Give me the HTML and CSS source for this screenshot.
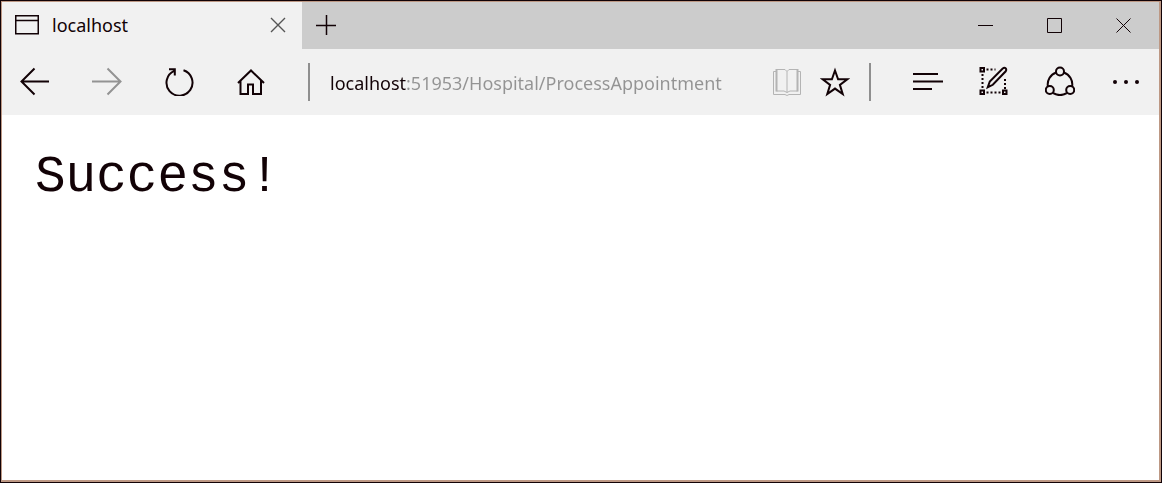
FILE: index.html
```html
<!DOCTYPE html>
<html lang="en">
<head>
<meta charset="utf-8">
<title>localhost</title>
<link rel="stylesheet" href="styles.css">
</head>
<body>
<div class="window">
  <header class="titlebar">
    <div class="tab">
      <svg class="tab-icon" width="24" height="20" viewBox="0 0 24 20"><path d="M.75.75h22.500v18H.75zM.75 5.500h22.500"/></svg>
      <span class="tab-title">localhost</span>
      <button class="tab-close" type="button" aria-label="Close tab"><svg width="16" height="16" viewBox="0 0 16 16"><path d="M1 1l14 14M15 1L1 15"/></svg></button>
    </div>
    <button class="new-tab" type="button" aria-label="New tab"><svg width="20" height="20" viewBox="0 0 20 20"><path d="M10.500 0v20M0 10.500h20"/></svg></button>
    <div class="window-controls">
      <button type="button" aria-label="Minimize"><svg width="15" height="15" viewBox="0 0 15 15"><path d="M0 7.500h15"/></svg></button>
      <button type="button" aria-label="Maximize"><svg width="15" height="15" viewBox="0 0 15 15"><path d="M.5.5h14v14H.5z"/></svg></button>
      <button type="button" aria-label="Close"><svg width="15" height="15" viewBox="0 0 15 15"><path d="M.5.5l14 14M14.500.5l-14 14"/></svg></button>
    </div>
  </header>
  <nav class="toolbar">
    <div class="group">
      <button type="button" aria-label="Back"><svg width="30" height="30" viewBox="0 0 30 30"><path d="M14.500 2.500L1.500 15.500l13 13M1.500 15.500H29"/></svg></button>
      <button type="button" aria-label="Forward" disabled><svg width="30" height="30" viewBox="0 0 30 30"><path d="M15.500 2.500l13 13-13 13M28.500 15.500H0"/></svg></button>
      <button type="button" aria-label="Refresh"><svg width="30" height="30" viewBox="0 0 30 30"><path d="M10.200 4.800A13 13 0 1 0 19.500 4.300M5 3.200h5.800v6.300"/></svg></button>
      <button type="button" aria-label="Home"><svg width="30" height="30" viewBox="0 0 30 30"><path d="M2 17L15 4.500l13 12.500M4.500 14.500V28H12V18.500h5V28h8V14.500"/></svg></button>
    </div>
    <div class="address">
      <input class="url" type="text" aria-label="Address" spellcheck="false" value="localhost:51953/Hospital/ProcessAppointment">
      <button class="reading" type="button" aria-label="Reading view" disabled><svg width="30" height="30" viewBox="0 0 30 30"><path d="M4.500 2.500h8.500l2 2 2-2h8.500v21.500H18l-3 1.500-3-1.500H4.500zM15 4.500v21"/><path class="outline" d="M4.500 2v22.500M25.500 2v22.500"/><path d="M4.500 4.500H1.500v23h11.500l2 1 2-1h11.500v-23h-3"/></svg></button>
      <button type="button" aria-label="Favorites"><svg width="30" height="30" viewBox="0 0 30 30"><path d="M15 3.500l3.100 8.800h9.200l-7.400 5.600 2.800 9.200L15 21.600l-7.700 5.500 2.800-9.200-7.400-5.600h9.200z"/></svg></button>
    </div>
    <div class="group actions">
      <button type="button" aria-label="Hub"><svg width="30" height="30" viewBox="0 0 30 30"><path d="M0 8h25M0 15.500h30M0 23h19"/></svg></button>
      <button type="button" aria-label="Make a web note"><svg width="30" height="30" viewBox="0 0 30 30"><path d="M1.500 2h3.500v3.500H1.500zM1.500 24.500h3.500V28H1.500zM24 24.500h3.500V28H24z"/><path class="dots" d="M7.500 3.500h9M3.500 8v15M7.500 26.500h15M26 13v10"/><path d="M8.800 21.200l2-5.700L23.700 2.500q1.700-1.300 2.900-.2t.1 3L13.800 18.800z"/></svg></button>
      <button type="button" aria-label="Share"><svg width="30" height="30" viewBox="0 0 30 30"><circle cx="15" cy="5.500" r="4"/><circle cx="4.800" cy="24" r="4"/><circle cx="25.200" cy="24" r="4"/><path d="M11.200 6.500A12.500 12.500 0 0 0 2.900 20.500M18.800 6.500A12.500 12.500 0 0 1 27.100 20.500M8.200 27.200Q15 31 21.800 27.200"/></svg></button>
      <button type="button" aria-label="More"><svg width="30" height="30" viewBox="0 0 30 30"><g class="solid"><circle cx="4" cy="16" r="2"/><circle cx="15" cy="16" r="2"/><circle cx="26" cy="16" r="2"/></g></svg></button>
    </div>
  </nav>
  <main class="page">Success!</main>
</div>
</body>
</html>
```
FILE: styles.css
```css
* { box-sizing: border-box; }
body {
  margin: 0;
  border: 1px solid #120206;
  font: 18px/24px "Noto Sans", "Open Sans", sans-serif;
  color: #120206;
}
.window {
  display: flex;
  flex-direction: column;
  min-height: calc(100vh - 2px);
  border: solid #bd9884;
  border-width: 1px 2px 2px 1px;
  background: #fff;
}
button {
  display: flex;
  align-items: center;
  justify-content: center;
  padding: 0;
  border: 0;
  background: transparent;
  color: inherit;
}
svg {
  display: block;
  flex: none;
  fill: none;
  stroke: currentColor;
  stroke-width: 2;
}
.titlebar {
  display: flex;
  height: 47px;
  background: #ccc;
}
.tab {
  display: flex;
  align-items: center;
  width: 300px;
  padding: 0 16px 2px 13px;
  background: #f1f1f1;
}
.tab-icon { stroke-width: 1.5; }
.tab-title { flex: 1; padding-left: 13px; }
.tab-close { color: #555; }
.tab-close svg { stroke-width: 1.4; }
.new-tab { width: 48px; padding-bottom: 2px; }
.new-tab svg { stroke-width: 1.5; }
.window-controls { display: flex; margin-left: auto; padding-right: 1px; }
.window-controls button { width: 69px; }
.window-controls svg { stroke-width: 1; }
.toolbar {
  display: flex;
  align-items: center;
  height: 66px;
  background: #f1f1f1;
}
.group { display: flex; gap: 6px; }
.group button { width: 66px; height: 66px; padding-bottom: 2px; }
.group button:disabled { color: #939393; }
.actions { gap: 0; }
.address {
  display: flex;
  flex: 1;
  align-items: center;
  height: 38px;
  margin: 0 24px;
  padding: 0 10px 0 20px;
  border: solid #8f8f8f;
  border-width: 0 2px;
}
.address button { width: 48px; }
.address .reading { color: #b4b4b4; }
.reading svg { stroke-width: 1; }
.reading .outline { stroke-width: 2; }
.url {
  flex: 1;
  min-width: 0;
  padding: 2px 0 0;
  border: 0;
  font: inherit;
  color: transparent;
  caret-color: #120206;
  background: linear-gradient(to right, #120206 77px, #939393 77px);
  background-clip: text;
  -webkit-background-clip: text;
}
.solid { fill: currentColor; stroke: none; }
.dots { stroke-dasharray: 2 2; }
.page {
  flex: 1;
  padding: 33px;
  font: 51px/60px "Courier New", "Liberation Mono", monospace;
}
```
